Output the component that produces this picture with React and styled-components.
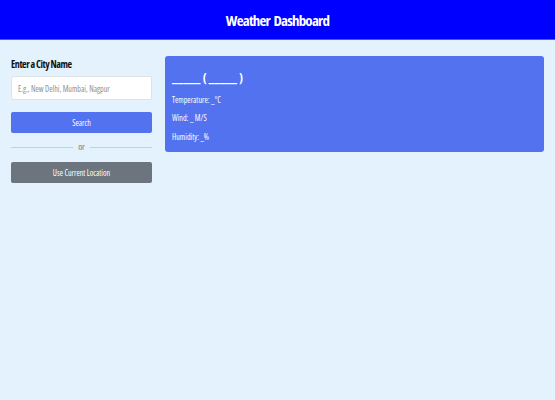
import React from 'react';
import styled, { createGlobalStyle } from 'styled-components';

const GlobalStyle = createGlobalStyle`
  * { margin: 0; padding: 0; box-sizing: border-box; }
  html, body { height: 100%; }
  body {
    background: #e3f2fd;
    font-family: "Open Sans", "Liberation Sans", sans-serif;
    font-stretch: 75%;
  }
`;

const App = () => {
  return (
    <>
      <GlobalStyle />
      <Header>Weather Dashboard</Header>
      <Container>
        <WeatherInput>
          <Label>Enter a City Name</Label>
          <CityInput type="text" placeholder="E.g., New Delhi, Mumbai, Nagpur" />
          <Button>Search</Button>
          <Separator><span>or</span></Separator>
          <Button secondary>Use Current Location</Button>
        </WeatherInput>
        <WeatherData>
          <CurrentWeather>
            <h2>_____ ( _____ )</h2>
            <Detail>Temperature: _°C</Detail>
            <Detail>Wind: _ M/S</Detail>
            <Detail>Humidity: _%</Detail>
          </CurrentWeather>
        </WeatherData>
      </Container>
    </>
  );
};

export default App;

const Header = styled.h1`
  background: #0000ff;
  color: #fff;
  height: 40px;
  display: flex;
  align-items: center;
  justify-content: center;
  font-size: 15px;
  font-weight: 700;
  letter-spacing: -0.8px;
  word-spacing: 1.5px;
  border-bottom: 1px solid #3d5bf0;
`;

const Container = styled.div`
  display: flex;
  gap: 13px;
  padding: 16px 11px;
`;

const WeatherInput = styled.div`
  width: 141px;
  flex-shrink: 0;
  display: flex;
  flex-direction: column;
`;

const Label = styled.h3`
  font-size: 10px;
  font-weight: 700;
  letter-spacing: -0.45px;
  color: #111;
  line-height: 14px;
  margin-top: 1px;
`;

const CityInput = styled.input`
  height: 24px;
  width: 100%;
  margin: 5px 0 12px;
  padding: 0 6px;
  border: 1px solid #dde3e8;
  border-radius: 2px;
  outline: none;
  font-family: inherit;
  font-stretch: 75%;
  font-size: 8px;
  background: #fff;

  &::placeholder { color: #8a8f94; }
`;

const Button = styled.button`
  width: 100%;
  height: 21px;
  border: none;
  border-radius: 2px;
  font-family: inherit;
  font-stretch: 75%;
  font-size: 8px;
  color: #fff;
  background: ${(props) => (props.secondary ? '#6c757d' : '#5372f0')};
  cursor: pointer;
`;

const Separator = styled.div`
  height: 1px;
  background: #c9ced3;
  margin: 14px 0 14px;
  display: flex;
  align-items: center;
  justify-content: center;

  span {
    background: #e3f2fd;
    color: #6c757d;
    font-size: 9px;
    padding: 0 5px;
    margin-top: -2px;
  }
`;

const WeatherData = styled.div`
  flex: 1;
`;

const CurrentWeather = styled.div`
  background: #5372f0;
  color: #fff;
  border-radius: 3px;
  height: 96px;
  padding: 14px 7px;

  h2 {
    font-size: 12px;
    font-weight: 700;
    line-height: 16px;
  }
`;

const Detail = styled.h6`
  font-size: 8px;
  font-weight: 500;
  margin-top: 7.5px;
  line-height: 11px;
`;
